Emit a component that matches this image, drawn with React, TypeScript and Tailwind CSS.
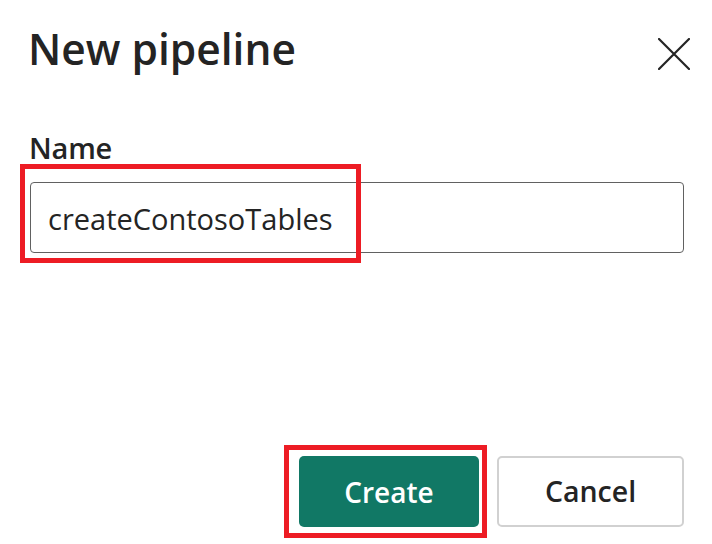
import React from 'react';

const App: React.FC = () => {
  return (
    <div
      className="flex h-[544px] w-[712px] flex-col bg-white pl-[30px] pr-[28px] text-[#242424]"
      style={{ fontFamily: '"Open Sans", "Noto Sans", sans-serif' }}
    >
      {/* Header */}
      <div className="flex items-start justify-between pt-[21px]">
        <h1 className="ml-[-2px] text-[42.5px] font-semibold leading-[56px]">New pipeline</h1>
        <button className="mt-[17px] mr-[-6px]" aria-label="Close">
          <svg width="32" height="32" viewBox="0 0 32 32" fill="none">
            <path d="M1 1L31 31M31 1L1 31" stroke="#242424" strokeWidth="2.2" strokeLinecap="round" />
          </svg>
        </button>
      </div>

      {/* Name field */}
      <label className="mt-[53px] ml-[-1px] text-[29px] font-semibold leading-[36px] tracking-[-0.2px]">Name</label>
      <div className="relative mt-[16px]">
        <div className="flex h-[71px] items-center rounded-[4px] border border-[#616161] px-[17px]">
          <span className="pt-[2px] text-[29px] leading-none">createContosoTables</span>
        </div>
        <div className="pointer-events-none absolute left-[-10px] top-[-18px] h-[99px] w-[341px] border-[5px] border-[#ED1C24]" />
      </div>

      <div className="flex-1" />

      {/* Actions */}
      <div className="flex items-center justify-end gap-[10px] pb-[6px]">
        <div className="border-[5px] border-[#ED1C24] py-[6px] pl-[10px] pr-[3px]">
          <button className="flex h-[71px] w-[180px] items-center justify-center rounded-[5px] bg-[#117865] text-[28px] font-semibold text-white">
            Create
          </button>
        </div>
        <button className="flex h-[71px] w-[187px] items-center justify-center rounded-[5px] border-2 border-[#d1d1d1] bg-white text-[28.5px] font-semibold text-[#242424]">
          Cancel
        </button>
      </div>
    </div>
  );
};

export default App;
